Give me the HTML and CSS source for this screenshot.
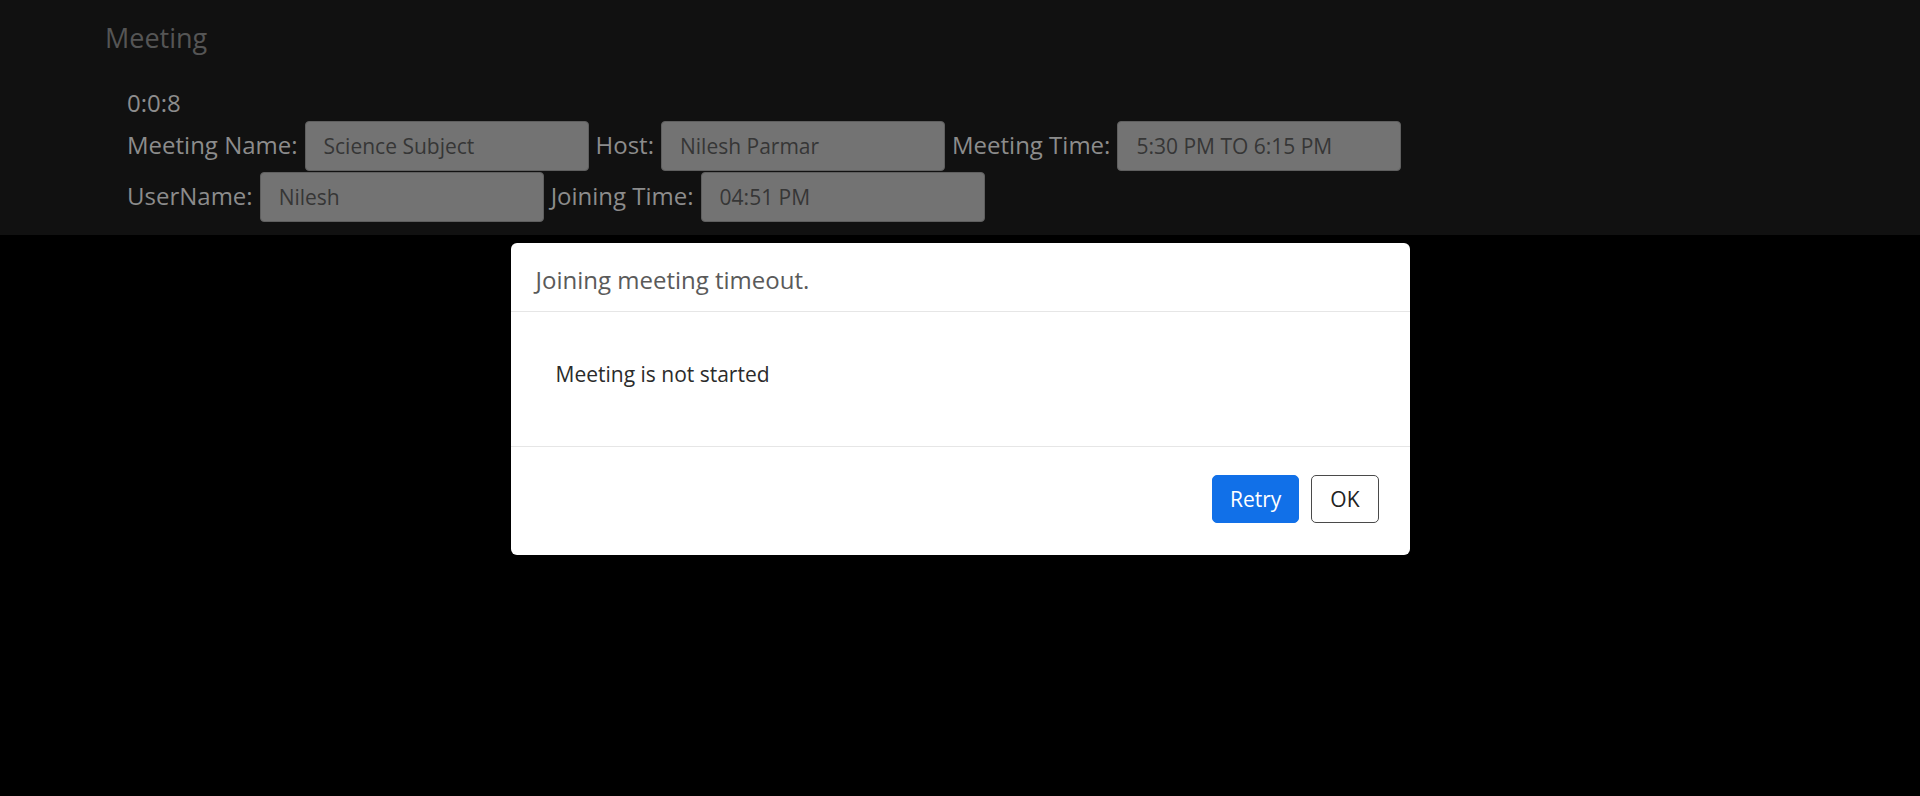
FILE: index.html
```html
<!DOCTYPE html>
<html lang="en">
<head>
<meta charset="utf-8">
<title>Meeting</title>
<link rel="stylesheet" href="styles.css">
</head>
<body>
<div class="page">
  <header class="meeting-header">
    <h4 class="meeting-title">Meeting</h4>
    <div class="info">
      <div class="timer">0:0:8</div>
      <div class="field-row">
        <label class="field-label">Meeting Name:</label>
        <input class="field-input" type="text" value="Science Subject" disabled>
        <label class="field-label">Host:</label>
        <input class="field-input" type="text" value="Nilesh Parmar" disabled>
        <label class="field-label">Meeting Time:</label>
        <input class="field-input" type="text" value="5:30 PM TO 6:15 PM" disabled>
      </div>
      <div class="field-row">
        <label class="field-label">UserName:</label>
        <input class="field-input" type="text" value="Nilesh" disabled>
        <label class="field-label">Joining Time:</label>
        <input class="field-input" type="text" value="04:51 PM" disabled>
      </div>
    </div>
  </header>
</div>

<div class="backdrop">
  <div class="modal">
    <div class="modal-header">
      <h5 class="modal-title">Joining meeting timeout.</h5>
    </div>
    <div class="modal-body">Meeting is not started</div>
    <div class="modal-footer">
      <button class="btn btn-primary" type="button">Retry</button>
      <button class="btn btn-outline" type="button">OK</button>
    </div>
  </div>
</div>
</body>
</html>
```
FILE: styles.css
```css
* {
  box-sizing: border-box;
}

html, body {
  margin: 0;
  padding: 0;
  background: #000;
  height: 100%;
}

body {
  font-family: "Open Sans", "Noto Sans", sans-serif;
  overflow: hidden;
}

.meeting-header {
  background: #111111;
  padding: 20px 0 13px 0;
}

.meeting-title {
  margin: 0;
  padding-left: 105px;
  font-size: 27px;
  line-height: 36px;
  font-weight: 400;
  color: #555555;
}

.info {
  padding-left: 127px;
}

.timer {
  margin-top: 31px;
  font-size: 24px;
  line-height: 32px;
  color: #8c8c8c;
}

.field-row {
  display: flex;
  align-items: baseline;
  margin-top: 2px;
}

.field-row + .field-row {
  margin-top: 1px;
}

.field-label {
  font-size: 24px;
  line-height: 32px;
  color: #8c8c8c;
  margin-right: 7px;
}

.field-input {
  width: 284px;
  height: 50px;
  margin: 0 7px 0 0;
  padding: 0 18px;
  font-family: "Open Sans", "Noto Sans", sans-serif;
  font-size: 21px;
  color: #363636;
  background: #737373;
  border: 1px solid #5f5f5f;
  border-radius: 4px;
  outline: none;
}

.field-input:disabled {
  color: #363636;
  -webkit-text-fill-color: #363636;
  opacity: 1;
}

.backdrop {
  position: fixed;
  inset: 0;
  display: flex;
  flex-direction: column;
  align-items: center;
  padding-top: 243px;
}

.modal {
  width: 899px;
  background: #ffffff;
  border-radius: 6px;
}

.modal-header {
  padding: 22px 24px 16px 25px;
  border-bottom: 1px solid #e6e6e6;
}

.modal-title {
  margin: 0;
  font-size: 24px;
  line-height: 30px;
  font-weight: 400;
  color: #5a5a5a;
}

.modal-body {
  padding: 47px 45px 57px 45px;
  font-size: 21px;
  line-height: 30px;
  color: #2b2b2b;
}

.modal-footer {
  display: flex;
  justify-content: flex-end;
  gap: 12px;
  padding: 28px 31px 32px 30px;
  border-top: 1px solid #e6e6e6;
}

.btn {
  height: 48px;
  padding: 0 17px;
  font-family: "Open Sans", "Noto Sans", sans-serif;
  font-size: 21px;
  line-height: 46px;
  border-radius: 5px;
  border: 1px solid transparent;
  cursor: pointer;
}

.btn-primary {
  background: #1170e8;
  border-color: #1170e8;
  color: #ffffff;
}

.btn-outline {
  background: #ffffff;
  border-color: #4a4a4a;
  color: #222222;
  padding: 0 18px;
}
```
